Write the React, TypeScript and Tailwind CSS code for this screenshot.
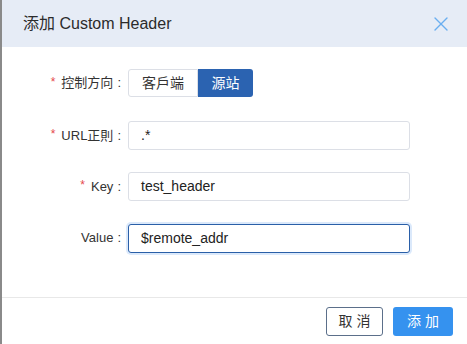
import { X } from 'lucide-react';

const font = { fontFamily: '"Liberation Sans", "Noto Sans CJK SC", sans-serif' };

const Label = ({ text, required }: { text: string; required?: boolean }) => (
  <div className="w-[126px] shrink-0 flex justify-end items-center pr-[7px] text-[13px] text-[#333]">
    {required && <span className="text-[#e5484d] text-[12px] -mt-[3px] mr-[6px]">*</span>}
    <span>{text}</span>
    <span className="ml-[4px]">:</span>
  </div>
);

const Field = ({ value, focused }: { value: string; focused?: boolean }) => (
  <div
    className={`w-[282px] h-[29px] flex items-center px-[12px] text-[14px] text-[#222] bg-white rounded-[3px] border ${
      focused ? 'border-[#2a5fa8] shadow-[0_0_0_2px_#dbe9fb]' : 'border-[#dcdfe6]'
    }`}
  >
    {value}
  </div>
);

export default function App() {
  return (
    <div className="w-[467px] h-[344px] bg-white border-l-2 border-[#8a8a8a] flex flex-col" style={font}>
      <div className="h-[47px] bg-[#e6ecf6] flex items-center justify-between pl-[21px] pr-[14px]">
        <span className="text-[16px] text-[#2b2b2b]">添加 Custom Header</span>
        <X size={24} strokeWidth={1.4} className="text-[#6aaef0]" />
      </div>

      <div className="flex flex-col pt-[22px] h-[250px]">
        <div className="flex items-center h-[28px]">
          <Label text="控制方向" required />
          <div className="flex h-[28px] text-[14px]">
            <div className="w-[70px] flex items-center justify-center border border-[#dcdfe6] rounded-l-[3px] text-[#333]">
              客戶端
            </div>
            <div className="w-[55px] flex items-center justify-center bg-[#2b63b1] text-white rounded-r-[3px]">
              源站
            </div>
          </div>
        </div>

        <div className="flex items-center h-[29px] mt-[24px]">
          <Label text="URL正則" required />
          <Field value=".*" />
        </div>

        <div className="flex items-center h-[29px] mt-[22px]">
          <Label text="Key" required />
          <Field value="test_header" />
        </div>

        <div className="flex items-center h-[30px] mt-[22px]">
          <Label text="Value" />
          <Field value="$remote_addr" focused />
        </div>
      </div>

      <div className="border-t border-[#e8e8e8] flex justify-end items-start gap-[10px] pt-[9px] pr-[14px] flex-1">
        <button className="w-[57px] h-[29px] border border-[#5b6f8a] rounded-[3px] text-[14px] text-[#333] tracking-[4px] pl-[4px]">
          取消
        </button>
        <button className="w-[60px] h-[29px] bg-[#3592ef] rounded-[3px] text-[14px] text-white tracking-[4px] pl-[4px]">
          添加
        </button>
      </div>
    </div>
  );
}
